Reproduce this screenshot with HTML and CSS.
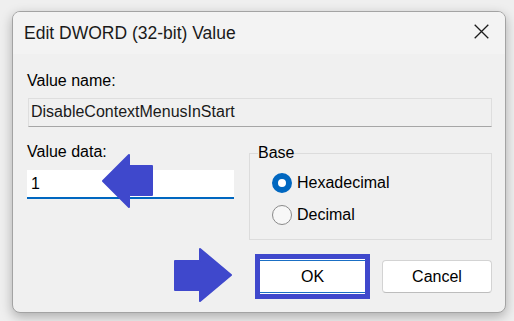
FILE: index.html
```html
<!DOCTYPE html>
<html>

<head>
	<title>Edit DWORD (32-bit) Value</title>
	<link rel="stylesheet" href="styles.css">
</head>

<body>
	<div class="dialog">
		<div class="titlebar">
			<span class="title">Edit DWORD (32-bit) Value</span>
			<svg class="close" width="15" height="15" viewBox="0 0 15 15">
				<path d="M0.7 0.7 L14.3 14.3 M14.3 0.7 L0.7 14.3" stroke="#1b1b1b" stroke-width="1.3" fill="none" />
			</svg>
		</div>

		<div class="content">
			<div class="label">Value name:</div>
			<div class="name-field">DisableContextMenusInStart</div>

			<div class="data-row">
				<div class="data-col">
					<div class="label">Value data:</div>
					<div class="data-field">1</div>
				</div>

				<fieldset class="base">
					<legend>Base</legend>
					<div class="radio-row">
						<span class="radio checked"></span>
						<span>Hexadecimal</span>
					</div>
					<div class="radio-row">
						<span class="radio"></span>
						<span>Decimal</span>
					</div>
				</fieldset>
			</div>

			<div class="buttons">
				<div class="highlight">
					<button class="btn ok">OK</button>
				</div>
				<button class="btn cancel">Cancel</button>
			</div>
		</div>
	</div>

	<!-- tutorial arrows drawn over the dialog -->
	<svg class="arrows" width="514" height="321" viewBox="0 0 514 321">
		<polygon points="103,181 129,155 129,166 152,166 152,195 129,195 129,207"
			fill="#3f48cc" stroke="#3f48cc" stroke-width="2" stroke-linejoin="round" />
		<polygon points="175,261 200,261 200,249 231,275 200,301 200,290 175,290"
			fill="#3f48cc" stroke="#3f48cc" stroke-width="2" stroke-linejoin="round" />
	</svg>
</body>

</html>
```

FILE: styles.css
```css
body {
	margin: 0;
	padding: 11px 0 0 12px;
	background-color: #efefef;
	font-family: "Liberation Sans", Arial, sans-serif;
	font-size: 16px;
	color: #000;
	position: relative;
	height: 321px;
	box-sizing: border-box;
	overflow: hidden;
}

.dialog {
	width: 494px;
	height: 302px;
	box-sizing: border-box;
	border: 1px solid #a3a3a3;
	border-radius: 8px;
	background-color: #f0f0f0;
	box-shadow: 0 4px 12px rgba(0, 0, 0, 0.28);
	overflow: hidden;
}

.titlebar {
	height: 42px;
	background-color: #f3f3f3;
	display: flex;
	align-items: center;
	justify-content: space-between;
	padding: 0 16px 0 11px;
}

.title {
	font-size: 17.5px;
	line-height: 20px;
	color: #1a1a1a;
}

.close {
	margin-bottom: 3px;
}

.content {
	padding: 0 13px 0 14px;
}

.label {
	line-height: 18px;
}

.content > .label {
	margin-top: 18px;
}

.name-field {
	margin: 8px 0 0 1px;
	border: 1px solid #dedede;
	border-bottom-color: #a6a6a6;
	line-height: 25px;
	padding: 0 0 2px 2px;
	color: #1a1a1a;
}

.data-row {
	display: flex;
	gap: 15px;
	align-items: flex-start;
	margin-top: 16px;
}

.data-col {
	width: 207px;
}

.data-field {
	margin-top: 9px;
	background-color: #fff;
	border-bottom: 2px solid #0067c0;
	line-height: 27px;
	padding-left: 4px;
}

.base {
	width: 243px;
	box-sizing: border-box;
	margin: 1px 0 0 0;
	padding: 5px 8px 8px 8px;
	border: 1px solid #dcdcdc;
}

.base legend {
	padding: 0;
	line-height: 18px;
}

.radio-row {
	height: 32px;
	display: flex;
	align-items: center;
	gap: 5px;
	line-height: 18px;
}

.radio {
	width: 20px;
	height: 20px;
	box-sizing: border-box;
	margin-left: 14px;
	border-radius: 50%;
	border: 1px solid #8a8a8a;
	background-color: #f7f7f7;
}

.radio.checked {
	border: 6px solid #0067c0;
	background-color: #fff;
}

.buttons {
	display: flex;
	justify-content: flex-end;
	align-items: center;
	gap: 12px;
	margin-top: 14px;
}

.highlight {
	border: 5px solid #3f48cc;
}

.btn {
	font-family: "Liberation Sans", Arial, sans-serif;
	font-size: 16px;
	color: #000;
	background-color: #fff;
	padding: 0;
	display: block;
}

.ok {
	width: 105px;
	height: 35px;
	border: none;
	box-shadow: inset 0 1px 0 #fff, inset 0 2px 0 #1a6fc4, inset 0 -1px 0 #fff, inset 0 -2px 0 #1a6fc4;
}

.cancel {
	width: 110px;
	height: 33px;
	border: 1px solid #d3d3d3;
	border-bottom-color: #bdbdbd;
	border-radius: 4px;
}

.arrows {
	position: absolute;
	top: 0;
	left: 0;
	pointer-events: none;
}
```
